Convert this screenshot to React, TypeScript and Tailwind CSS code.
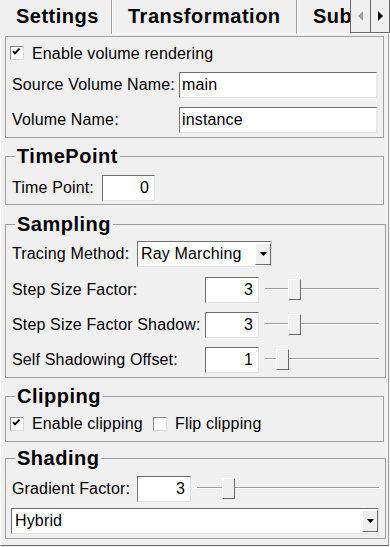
import React from 'react';

function Check({ checked }: { checked?: boolean }) {
  return (
    <span className="w-[14px] h-[14px] shrink-0 bg-white border border-t-[#8a8a8a] border-l-[#8a8a8a] border-r-[#dadada] border-b-[#dadada] flex">
      {checked && (
        <svg width="12" height="12" viewBox="0 0 12 12">
          <path d="M2 4.2 L4 6.4 L8.6 1.6" fill="none" stroke="#000" strokeWidth="1.9" />
        </svg>
      )}
    </span>
  );
}

function Field({ value, className, right }: { value: string; className: string; right?: boolean }) {
  return (
    <div
      className={`h-[26px] shrink-0 bg-white border border-t-[#707070] border-l-[#707070] border-r-[#e3e3e3] border-b-[#e3e3e3] flex items-center ${
        right ? 'justify-end pr-[5px]' : 'pl-[2px]'
      } ${className}`}
    >
      {value}
    </div>
  );
}

function Arrow() {
  return (
    <svg width="7" height="4" viewBox="0 0 7 4">
      <path d="M0 0H7L3.5 4Z" fill="#000" />
    </svg>
  );
}

function Select({ label, className }: { label: string; className: string }) {
  return (
    <div
      className={`h-[26px] shrink-0 bg-white border border-t-[#707070] border-l-[#707070] border-r-[#e3e3e3] border-b-[#e3e3e3] flex items-center pl-[3px] ${className}`}
    >
      <span className="flex-1">{label}</span>
      <span className="w-[16px] h-[22px] bg-[#f0f0f0] border border-t-white border-l-white border-r-[#696969] border-b-[#696969] flex items-center justify-center">
        <Arrow />
      </span>
    </div>
  );
}

function Slider({ className, thumb }: { className: string; thumb: string }) {
  return (
    <div className={`relative h-[26px] shrink-0 ${className}`}>
      <div className="absolute left-0 right-0 top-[11px] h-[2px] bg-[#a0a0a0] border-b border-white" />
      <div
        className={`absolute top-[2px] w-[13px] h-[21px] bg-[#f0f0f0] border border-t-white border-l-white border-r-[#696969] border-b-[#696969] ${thumb}`}
      />
    </div>
  );
}

function Group({ title, className, children }: { title: string; className: string; children: React.ReactNode }) {
  return (
    <fieldset className={`ml-[4px] w-[379px] border border-[#a0a0a0] px-[6px] ${className}`}>
      <legend className="ml-[3px] px-[2px] text-[20px] font-bold leading-[22px] tracking-[0.5px]">{title}</legend>
      {children}
    </fieldset>
  );
}

export default function App() {
  return (
    <div className="w-[390px] h-[547px] bg-[#f0f0f0] overflow-hidden text-[16px] leading-[18px] tracking-[0.15px] text-black font-['Liberation_Sans',Arial,sans-serif]">
      {/* tab strip */}
      <div className="flex h-[34px]">
        <div className="w-[112px] h-full border-r border-r-[#a0a0a0] pl-[16px] text-[20px] font-bold leading-[33px] tracking-[0.5px]">
          Settings
        </div>
        <div className="w-[185px] h-full border-l border-l-white border-r border-r-[#a0a0a0] border-b border-b-white pl-[15px] text-[20px] font-bold leading-[33px] tracking-[0.5px]">
          Transformation
        </div>
        <div className="w-[53px] h-full border-l border-l-white border-b border-b-white pl-[15px] text-[20px] font-bold leading-[33px] tracking-[0.5px] overflow-hidden whitespace-nowrap">
          Sub
        </div>
        <div className="h-full flex border-b border-b-white">
          <div className="w-[21px] h-[33px] border-l border-l-[#696969] border-r border-r-[#696969] border-b border-b-[#696969] flex items-center justify-center">
            <svg width="5" height="10" viewBox="0 0 5 10">
              <path d="M5 0V10L0 5Z" fill="#a0a0a0" />
            </svg>
          </div>
          <div className="w-[19px] h-[33px] border-r border-r-[#696969] border-b border-b-[#696969] flex items-center justify-center">
            <svg width="5" height="10" viewBox="0 0 5 10">
              <path d="M0 0V10L5 5Z" fill="#000" />
            </svg>
          </div>
        </div>
      </div>

      {/* panel */}
      <div className="w-[389px] h-[512px] border-l border-l-white border-r border-r-[#a0a0a0] border-b border-b-[#696969] flex flex-col">
        <div className="mt-[2px] ml-[4px] w-[379px] border border-[#a0a0a0] px-[6px] pt-[8px] pb-[4px] flex flex-col">
          <div className="flex items-start h-[18px] -ml-[2px]">
            <span className="mt-[1px] flex">
              <Check checked />
            </span>
            <span className="ml-[8px]">Enable volume rendering</span>
          </div>
          <div className="flex items-center mt-[9px]">
            <span className="w-[168px]">Source Volume Name:</span>
            <Field value="main" className="w-[198px]" />
          </div>
          <div className="flex items-center mt-[9px]">
            <span className="w-[168px]">Volume Name:</span>
            <Field value="instance" className="w-[198px]" />
          </div>
        </div>

        <Group title="TimePoint" className="mt-[7px] pt-[8px] pb-[3px]">
          <div className="flex items-center">
            <span className="w-[90px]">Time Point:</span>
            <Field value="0" right className="w-[53px]" />
          </div>
        </Group>

        <Group title="Sampling" className="mt-[8px] pt-[6px] pb-[4px]">
          <div className="flex items-center">
            <span className="w-[125px]">Tracing Method:</span>
            <Select label="Ray Marching" className="w-[135px]" />
          </div>
          <div className="flex items-center mt-[10px]">
            <span className="w-[193px]">Step Size Factor:</span>
            <Field value="3" right className="w-[54px]" />
            <Slider className="ml-[6px] w-[114px]" thumb="left-[23px]" />
          </div>
          <div className="flex items-center mt-[9px]">
            <span className="w-[193px]">Step Size Factor Shadow:</span>
            <Field value="3" right className="w-[54px]" />
            <Slider className="ml-[6px] w-[114px]" thumb="left-[23px]" />
          </div>
          <div className="flex items-center mt-[9px]">
            <span className="w-[193px]">Self Shadowing Offset:</span>
            <Field value="1" right className="w-[54px]" />
            <Slider className="ml-[6px] w-[114px]" thumb="left-[11px]" />
          </div>
        </Group>

        <Group title="Clipping" className="mt-[7px] pt-[8px] pb-[8px]">
          <div className="flex items-center h-[18px] -ml-[2px]">
            <span className="w-[143px] flex items-center">
              <Check checked />
              <span className="ml-[8px]">Enable clipping</span>
            </span>
            <Check />
            <span className="ml-[8px]">Flip clipping</span>
          </div>
        </Group>

        <Group title="Shading" className="mt-[5px] pt-[7px] pb-[4px]">
          <div className="flex items-center">
            <span className="w-[125px]">Gradient Factor:</span>
            <Field value="3" right className="w-[54px]" />
            <Slider className="ml-[6px] w-[182px]" thumb="left-[25px]" />
          </div>
          <div className="flex mt-[6px] -ml-[1px]">
            <Select label="Hybrid" className="w-[368px]" />
          </div>
        </Group>
      </div>
    </div>
  );
}
